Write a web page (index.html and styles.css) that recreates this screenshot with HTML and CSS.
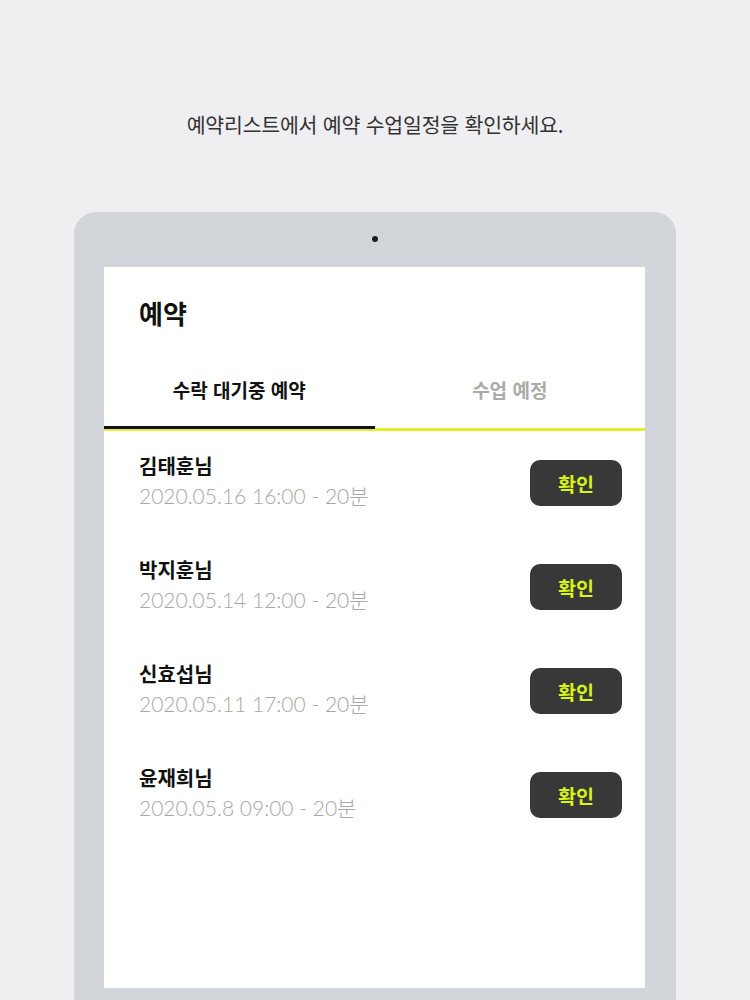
FILE: index.html
```html
<!DOCTYPE html>
<html lang="ko">
<head>
<meta charset="utf-8">
<link rel="stylesheet" href="styles.css">
</head>
<body>
<div class="page">
  <p class="caption">예약리스트에서 예약 수업일정을 확인하세요.</p>
  <div class="tablet">
    <div class="camera"></div>
    <div class="screen">
      <h1 class="title">예약</h1>
      <div class="tabs">
        <div class="tab active">수락 대기중 예약</div>
        <div class="tab">수업 예정</div>
      </div>
      <ul class="list">
        <li class="item">
          <div class="info"><div class="name">김태훈님</div><div class="date">2020.05.16 16:00 - 20분</div></div>
          <button class="btn">확인</button>
        </li>
        <li class="item">
          <div class="info"><div class="name">박지훈님</div><div class="date">2020.05.14 12:00 - 20분</div></div>
          <button class="btn">확인</button>
        </li>
        <li class="item">
          <div class="info"><div class="name">신효섭님</div><div class="date">2020.05.11 17:00 - 20분</div></div>
          <button class="btn">확인</button>
        </li>
        <li class="item">
          <div class="info"><div class="name">윤재희님</div><div class="date">2020.05.8 09:00 - 20분</div></div>
          <button class="btn">확인</button>
        </li>
      </ul>
    </div>
  </div>
</div>
</body>
</html>
```

FILE: styles.css
```css
* { box-sizing: border-box; }
html, body { margin: 0; padding: 0; }
body {
  background: #efeef0;
  font-family: "Noto Sans CJK KR", "Noto Sans", sans-serif;
  width: 750px;
  height: 1000px;
  overflow: hidden;
}
.page {
  display: flex;
  flex-direction: column;
  align-items: center;
}
.caption {
  margin: 109px 0 0;
  font-size: 20.5px;
  line-height: 30px;
  color: #333;
  font-weight: 400;
  letter-spacing: -0.2px;
}
.tablet {
  margin-top: 73px;
  width: 602px;
  height: 800px;
  background: #d2d5d9;
  border-radius: 22px 22px 0 0;
  padding: 22px 30px 0;
  display: flex;
  flex-direction: column;
  align-items: center;
}
.camera {
  width: 6px;
  height: 6px;
  border-radius: 50%;
  background: #1e1e1e;
  margin-top: 2px;
}
.screen {
  margin-top: 25px;
  width: 541px;
  height: 721px;
  background: #fff;
  align-self: stretch;
}
.title {
  margin: 0;
  padding: 28px 0 0 35px;
  font-size: 26px;
  line-height: 36px;
  font-weight: 700;
  color: #111;
}
.tabs {
  display: flex;
  margin-top: 43px;
  border-bottom: 3px solid #e2ef2b;
}
.tab {
  flex: 1;
  text-align: center;
  font-size: 19px;
  font-weight: 700;
  color: #aaa;
  height: 55px;
  line-height: 32px;
  margin-bottom: -1px;
  border-bottom: 3px solid transparent;
}
.tab.active {
  color: #111;
  border-bottom-color: #111;
}
.list {
  list-style: none;
  margin: 0;
  padding: 20px 23px 0 35px;
}
.item {
  display: flex;
  justify-content: space-between;
  align-items: flex-start;
  height: 104px;
}
.name {
  font-size: 20px;
  line-height: 30px;
  font-weight: 700;
  color: #111;
}
.date {
  font-family: "Lato", "Noto Sans CJK KR", sans-serif;
  font-size: 21px;
  line-height: 30px;
  font-weight: 300;
  color: #a8a8a8;
}
.btn {
  margin-top: 9px;
  width: 92px;
  height: 46px;
  border: none;
  border-radius: 10px;
  background: #383838;
  color: #d8f21c;
  font-family: "Noto Sans CJK KR", sans-serif;
  font-size: 19.5px;
  font-weight: 700;
  padding: 0;
}
```
